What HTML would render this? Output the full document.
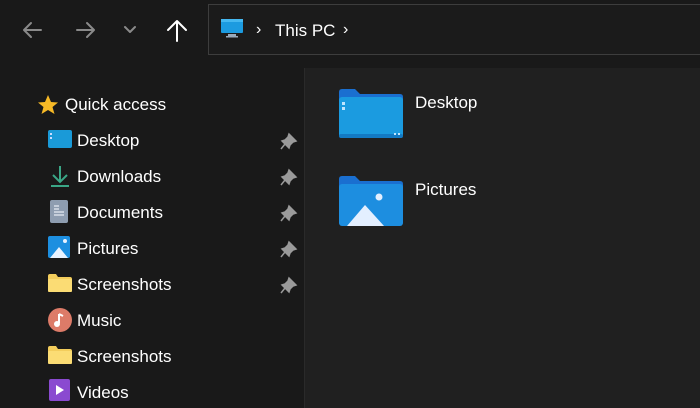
<!DOCTYPE html>
<html><head><meta charset="utf-8"><style>
body{margin:0;width:700px;height:400px;background:#191919;overflow:hidden;position:relative;font-family:"Segoe UI","Liberation Sans",sans-serif;color:#fff}
.abs{position:absolute}
.addr{left:208px;top:4px;width:520px;height:51px;border:1px solid #3d3d3d;box-sizing:border-box;background:#1b1b1b}
.main{left:304px;top:68px;width:400px;height:340px;background:#202020;border-left:1px solid #2a2a2a}
.t{position:absolute;font-size:17px;line-height:20px;color:#fff;white-space:nowrap}
.pin{position:absolute;left:280px}
</style></head><body>
<svg class="abs" style="left:0;top:0" width="205" height="60">
<g fill="none" stroke-width="2" stroke-linecap="round" stroke-linejoin="round">
<path d="M24 30H41M31 23L24 30L31 37" stroke="#8a8a8a"/>
<path d="M77 30H94M87 23L94 30L87 37" stroke="#8a8a8a"/>
<path d="M125 27L130 32L135 27" stroke="#8a8a8a"/>
<path d="M177 22V41M168 30L177 21L186 30" stroke="#fff"/>
</g></svg>
<div class="abs addr"></div>
<svg class="abs" style="left:220px;top:18px" width="26" height="22"><rect x="1" y="1" width="22" height="14" rx="1" fill="#1c9be0"/><rect x="1" y="1" width="22" height="3" fill="#45b8f0"/><rect x="8" y="16" width="8" height="2" fill="#9ab"/><rect x="6" y="18" width="12" height="1.5" fill="#9ab"/></svg>
<div class="t" style="left:256px;top:20px;font-size:16px">›</div>
<div class="t" style="left:275px;top:21px">This PC</div>
<div class="t" style="left:343px;top:20px;font-size:16px">›</div>
<div class="abs main"></div>

<svg class="abs" style="left:36px;top:93px" width="24" height="24"><path d="M12 2L15 9L22 9.5L16.5 14L18.5 21L12 17L5.5 21L7.5 14L2 9.5L9 9Z" fill="#f6b926"/></svg>
<div class="t" style="left:65px;top:95px">Quick access</div>

<svg class="abs" style="left:48px;top:130px" width="26" height="22"><rect x="0" y="0" width="24" height="18" rx="2" fill="#1a9ad8"/><rect x="2" y="3" width="2" height="2" fill="#cdf"/><rect x="2" y="7" width="2" height="2" fill="#cdf"/></svg>
<div class="t" style="left:77px;top:131px">Desktop</div>
<svg class="abs" style="left:48px;top:165px" width="26" height="24"><path d="M12 1V16M5 10L12 17L19 10" stroke="#3aa686" stroke-width="2" fill="none"/><path d="M3 21H21" stroke="#3aa686" stroke-width="2"/></svg>
<div class="t" style="left:77px;top:167px">Downloads</div>
<svg class="abs" style="left:50px;top:200px" width="22" height="24"><rect x="0" y="0" width="18" height="23" rx="2" fill="#8e9db0"/><path d="M4 6H9M4 9H9M4 12H14M4 15H14" stroke="#e6ecf2" stroke-width="1.3"/></svg>
<div class="t" style="left:77px;top:203px">Documents</div>
<svg class="abs" style="left:48px;top:236px" width="24" height="24"><rect x="0" y="0" width="22" height="22" rx="2" fill="#1d8fe0"/><path d="M2 22L11 11L20 22Z" fill="#e8f2ff"/><circle cx="17" cy="5" r="2" fill="#e8f2ff"/></svg>
<div class="t" style="left:77px;top:239px">Pictures</div>
<svg class="abs" style="left:48px;top:274px" width="26" height="20"><path d="M0 2Q0 0 2 0H8L10 3H22Q24 3 24 5V17H0Z" fill="#f3cd5c"/><rect x="0" y="5" width="24" height="13" rx="1" fill="#fbdc74"/></svg>
<div class="t" style="left:77px;top:275px">Screenshots</div>
<svg class="abs" style="left:48px;top:308px" width="24" height="24"><circle cx="12" cy="12" r="12" fill="#dd7b68"/><path d="M11 6V15" stroke="#fff" stroke-width="2"/><circle cx="9" cy="16" r="3" fill="#fff"/><path d="M11 6L15 8" stroke="#fff" stroke-width="2"/></svg>
<div class="t" style="left:77px;top:311px">Music</div>
<svg class="abs" style="left:48px;top:346px" width="26" height="20"><path d="M0 2Q0 0 2 0H8L10 3H22Q24 3 24 5V17H0Z" fill="#f3cd5c"/><rect x="0" y="5" width="24" height="13" rx="1" fill="#fbdc74"/></svg>
<div class="t" style="left:77px;top:347px">Screenshots</div>
<svg class="abs" style="left:49px;top:379px" width="22" height="22"><rect x="0" y="0" width="21" height="22" rx="2" fill="#8a4ad0"/><path d="M7 6L15 11L7 16Z" fill="#fff"/></svg>
<div class="t" style="left:77px;top:383px">Videos</div>

<svg class="pin" style="top:132px" width="18" height="18"><path d="M9 2L16 9L13 10L10 13L9 16L2 9L5 8L8 5Z M5 12L1 17" fill="#9a9a9a" stroke="#9a9a9a" stroke-width="1.5"/></svg>
<svg class="pin" style="top:168px" width="18" height="18"><path d="M9 2L16 9L13 10L10 13L9 16L2 9L5 8L8 5Z M5 12L1 17" fill="#9a9a9a" stroke="#9a9a9a" stroke-width="1.5"/></svg>
<svg class="pin" style="top:204px" width="18" height="18"><path d="M9 2L16 9L13 10L10 13L9 16L2 9L5 8L8 5Z M5 12L1 17" fill="#9a9a9a" stroke="#9a9a9a" stroke-width="1.5"/></svg>
<svg class="pin" style="top:240px" width="18" height="18"><path d="M9 2L16 9L13 10L10 13L9 16L2 9L5 8L8 5Z M5 12L1 17" fill="#9a9a9a" stroke="#9a9a9a" stroke-width="1.5"/></svg>
<svg class="pin" style="top:276px" width="18" height="18"><path d="M9 2L16 9L13 10L10 13L9 16L2 9L5 8L8 5Z M5 12L1 17" fill="#9a9a9a" stroke="#9a9a9a" stroke-width="1.5"/></svg>

<svg class="abs" style="left:338px;top:88px" width="66" height="52"><path d="M1 4Q1 1 4 1H17L22 6H62Q65 6 65 9V20H1Z" fill="#1a6fd0"/><rect x="1" y="9" width="64" height="41" rx="3" fill="#1b9be0"/><rect x="1" y="46" width="64" height="4" rx="2" fill="#137ac4"/><rect x="4" y="14" width="3" height="3" fill="#bfe6ff"/><rect x="4" y="19" width="3" height="3" fill="#bfe6ff"/><rect x="56" y="45" width="2" height="2" fill="#bfe6ff"/><rect x="60" y="45" width="2" height="2" fill="#bfe6ff"/></svg>
<div class="t" style="left:415px;top:93px">Desktop</div>
<svg class="abs" style="left:338px;top:175px" width="66" height="52"><path d="M1 4Q1 1 4 1H17L22 6H62Q65 6 65 9V20H1Z" fill="#1a6fd0"/><rect x="1" y="9" width="64" height="42" rx="3" fill="#1d8ee0"/><path d="M9 51L27 30L46 51Z" fill="#e3efff"/><circle cx="41" cy="22" r="3.5" fill="#e3efff"/></svg>
<div class="t" style="left:415px;top:180px">Pictures</div>
</body></html>
